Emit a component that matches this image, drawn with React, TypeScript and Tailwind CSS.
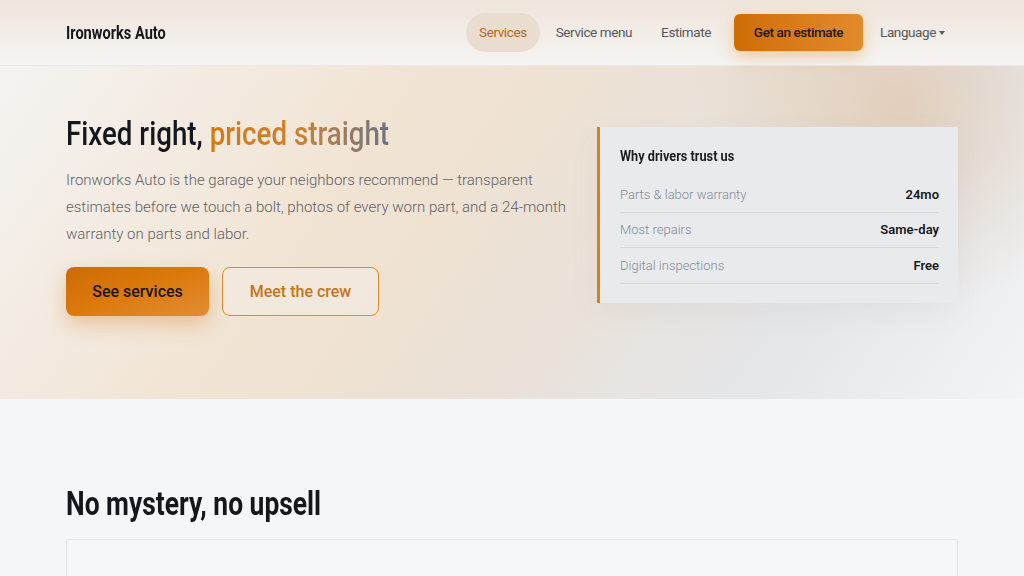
import { useState } from 'react';

const stats = [
  { label: 'Parts & labor warranty', value: '24mo' },
  { label: 'Most repairs', value: 'Same-day' },
  { label: 'Digital inspections', value: 'Free' },
];

const navLinks = ['Services', 'Service menu', 'Estimate'];

// no condensed face is installed, so the headings squeeze Roboto sideways
const narrow = 'inline-block origin-left whitespace-nowrap';

const Header = () => {
  const [active] = useState('Services');
  return (
    <header className="h-[66px] border-b border-[#ebe9e7] bg-gradient-to-b from-[#efe5da] to-[#f5f4f3]">
      <div className="mx-auto flex h-full max-w-[892px] items-center justify-between font-['Roboto',sans-serif]">
        <a className="text-[18px] font-bold text-[#15171c]">
          <span className={`${narrow} scale-x-[0.81]`}>Ironworks Auto</span>
        </a>
        <nav className="flex items-center gap-[3px] text-[13.5px] tracking-[-0.4px]">
          {navLinks.map((link) => (
            <a
              key={link}
              className={
                link === active
                  ? 'rounded-full bg-[#eaddd0] px-[13px] py-[9px] text-[#b8651c]'
                  : 'px-[13px] py-[9px] text-[#55575c]'
              }
            >
              {link}
            </a>
          ))}
          <button className="ml-[7px] h-[37px] w-[129px] rounded-[6px] bg-gradient-to-r from-[#cf6d04] to-[#e28b2b] font-medium text-[#1a1410] shadow-[0_6px_16px_rgba(221,128,30,0.35)]">
            Get an estimate
          </button>
          <button className="ml-[1px] flex items-center gap-[3px] px-[13px] py-[9px] text-[#55575c]">
            Language
            <span className="h-0 w-0 border-x-[3.5px] border-t-[4px] border-x-transparent border-t-[#55575c]" />
          </button>
        </nav>
      </div>
    </header>
  );
};

const Hero = () => (
  <section className="bg-[radial-gradient(circle_at_88%_12%,rgba(222,180,135,0.45),transparent_22%),linear-gradient(125deg,#f5f3f1_0%,#f1e3d2_35%,#ebe1d6_55%,#e4e6ea_78%,#f3f4f5_100%)] pb-[83px] pt-[47px] font-['Roboto',sans-serif]">
    <div className="mx-auto grid max-w-[892px] grid-cols-[1fr_361px] items-center gap-[30px]">
      <div>
        <h1 className="text-[33px] font-medium leading-[42px] text-[#15171c]">
          <span className={`${narrow} scale-x-[0.84]`}>
            Fixed right,{' '}
            <span className="bg-gradient-to-r from-[#d97706] via-[#c8822f] to-[#6b7280] bg-clip-text text-transparent">
              priced straight
            </span>
          </span>
        </h1>
        <p className="mt-[12px] max-w-[510px] text-[15px] font-light leading-[27px] text-[#5f6166]">
          Ironworks Auto is the garage your neighbors recommend — transparent estimates before we touch a bolt,
          photos of every worn part, and a 24-month warranty on parts and labor.
        </p>
        <div className="mt-[19px] flex gap-[13px] text-[16px] font-medium">
          <button className="h-[49px] w-[143px] rounded-[8px] bg-gradient-to-br from-[#cc6b04] via-[#dc7a0c] to-[#e28d31] text-[#17120d] shadow-[0_8px_20px_rgba(214,120,20,0.35)]">
            See services
          </button>
          <button className="h-[49px] w-[157px] rounded-[8px] border-[1.5px] border-[#e08a2c] bg-[#f4ebe2]/60 text-[#c8741a]">
            Meet the crew
          </button>
        </div>
      </div>
      <aside className="border-l-[3px] border-[#e07e10] bg-[#e9eaec] pb-[19px] pl-[20px] pr-[19px] pt-[19px] shadow-[0_10px_30px_rgba(120,110,100,0.06)]">
        <h2 className="text-[15.5px] font-bold leading-[20px] text-[#1b1d22]">
          <span className={`${narrow} scale-x-[0.82]`}>Why drivers trust us</span>
        </h2>
        <dl className="mt-[11.5px] text-[13px]">
          {stats.map((s) => (
            <div key={s.label} className="flex h-[35.5px] items-center justify-between border-b border-[#d7d9dd]">
              <dt className="font-light text-[#838b99]">{s.label}</dt>
              <dd className="font-semibold text-[#17191d]">{s.value}</dd>
            </div>
          ))}
        </dl>
      </aside>
    </div>
  </section>
);

const App = () => {
  return (
    <div className="min-h-screen bg-[#f5f6f8] font-['Roboto',sans-serif]">
      <Header />
      <Hero />
      <section className="pt-[84px]">
        <div className="mx-auto max-w-[892px]">
          <h2 className="text-[33px] font-bold leading-[42px] text-[#15171c]">
            <span className={`${narrow} scale-x-[0.8]`}>No mystery, no upsell</span>
          </h2>
          <div className="mt-[14px] h-[200px] border border-[#e1e3e7] bg-[#f6f7f8]" />
        </div>
      </section>
    </div>
  );
};

export default App;
